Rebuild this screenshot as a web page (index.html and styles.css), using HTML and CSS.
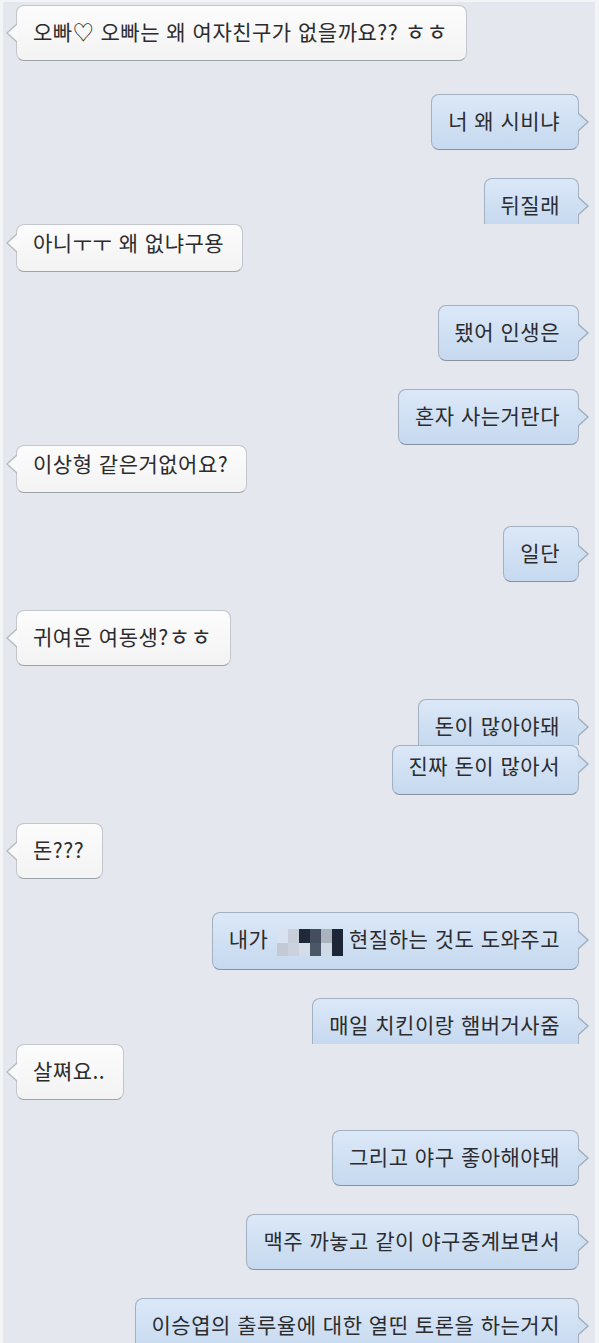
FILE: index.html
```html
<!DOCTYPE html>
<html lang="ko">
<head>
<meta charset="utf-8">
<title>채팅</title>
<link rel="stylesheet" href="styles.css">
</head>
<body>
<div class="chat">
  <div class="row in"><div class="bubble">오빠♡ 오빠는 왜 여자친구가 없을까요?? <span class="jamo">ㅎㅎ</span></div></div>
  <div class="row out wide"><div class="bubble">너 왜 시비냐</div></div>
  <div class="row out"><div class="bubble cut">뒤질래</div></div>
  <div class="row in joined"><div class="bubble short">아니ㅜㅜ 왜 없냐구용</div></div>
  <div class="row out wide"><div class="bubble">됐어 인생은</div></div>
  <div class="row out"><div class="bubble">혼자 사는거란다</div></div>
  <div class="row in joined"><div class="bubble short">이상형 같은거없어요?</div></div>
  <div class="row out wide"><div class="bubble">일단</div></div>
  <div class="row in"><div class="bubble">귀여운 여동생?<span class="jamo">ㅎㅎ</span></div></div>
  <div class="row out wide"><div class="bubble cut">돈이 많아야돼</div></div>
  <div class="row out joined"><div class="bubble short taller">진짜 돈이 많아서</div></div>
  <div class="row in"><div class="bubble">돈???</div></div>
  <div class="row out wide"><div class="bubble">내가 <span class="mosaic"><span class="mosaic-grid"><i class="m1"></i><i class="m2"></i><i class="m3"></i><i class="m4"></i><i class="m5"></i><i class="m6"></i><i class="m7"></i><i class="m8"></i><i class="m9"></i><i class="m10"></i><i class="m11"></i><i class="m12"></i></span></span> 현질하는 것도 도와주고</div></div>
  <div class="row out"><div class="bubble cut">매일 치킨이랑 햄버거사줌</div></div>
  <div class="row in joined"><div class="bubble">살쪄요..</div></div>
  <div class="row out wide tight"><div class="bubble">그리고 야구 좋아해야돼</div></div>
  <div class="row out"><div class="bubble">맥주 까놓고 같이 야구중계보면서</div></div>
  <div class="row out"><div class="bubble">이승엽의 출루율에 대한 열띤 토론을 하는거지</div></div>
</div>
</body>
</html>
```

FILE: styles.css
```css
html, body {
  margin: 0;
  padding: 0;
}
body {
  background: #f3f4f6;
  height: 1343px;
  overflow: hidden;
  font-family: "Noto Sans CJK KR", "Noto Sans", sans-serif;
}
.chat {
  margin: 2px 4px 0 3px;
  height: 1341px;
  overflow: hidden;
  box-sizing: border-box;
  padding: 3px 16px 0 13px;
  background: #e4e7ed;
  display: flex;
  flex-direction: column;
}
.row {
  display: flex;
  margin-top: 28px;
  flex-shrink: 0;
}
.row:first-child { margin-top: 0; }
.row.wide { margin-top: 33px; }
.row.wide.tight { margin-top: 30px; }
.row.joined { margin-top: 0; }
.row.in { justify-content: flex-start; }
.row.out { justify-content: flex-end; }

.bubble {
  position: relative;
  font-size: 21px;
  letter-spacing: 0.5px;
  line-height: 24px;
  color: #2c2c2e;
  padding: 13px 18px 17px 16px;
  border: 1px solid;
  border-radius: 8px;
  white-space: nowrap;
}
.jamo {
  font-size: 1.1em;
  line-height: 0;
}
.in .bubble {
  background: linear-gradient(#fcfcfc, #f3f3f4);
  border-color: #c3c7cd;
  border-bottom-color: #9ea3aa;
}
.out .bubble {
  background: linear-gradient(#dbe8f8, #c6d9ef);
  border-color: #a3b0c0;
  border-bottom-color: #87929f;
}
.bubble.short { padding-top: 5px; }
.bubble.short.taller { padding-top: 7px; padding-bottom: 17px; }
.bubble.cut {
  padding-bottom: 8px;
  border-bottom: none;
  border-bottom-left-radius: 0;
  border-bottom-right-radius: 0;
}

.bubble::before,
.bubble::after {
  content: "";
  position: absolute;
  width: 0;
  height: 0;
  border-style: solid;
}
.bubble::before { top: 17px; }
.bubble::after { top: 18px; }
.bubble.short::before { top: 8px; }
.bubble.short::after { top: 9px; }

.in .bubble::before {
  left: -11px;
  border-width: 10px 11px 10px 0;
  border-color: transparent #b6bbc2 transparent transparent;
}
.in .bubble::after {
  left: -9px;
  border-width: 9px 10px 9px 0;
  border-color: transparent #f9f9fa transparent transparent;
}
.out .bubble::before {
  right: -11px;
  border-width: 10px 0 10px 11px;
  border-color: transparent transparent transparent #a0adbd;
}
.out .bubble::after {
  right: -9px;
  border-width: 9px 0 9px 10px;
  border-color: transparent transparent transparent #d0e0f3;
}

.mosaic {
  display: inline-block;
  width: 66px;
  height: 27px;
  overflow: hidden;
  vertical-align: -5px;
  margin: -4px 0 -4px 2px;
}
.mosaic-grid {
  display: grid;
  grid-template-columns: repeat(6, 11px);
  grid-template-rows: 14px 13px;
}
.mosaic i { display: block; }
.m1 { background: #d9e2ef; }
.m2 { background: #c8cfda; }
.m3 { background: #1f2939; }
.m4 { background: #434d5e; }
.m5 { background: #a9b2be; }
.m6 { background: #1c2636; }
.m7 { background: #c3cad6; }
.m8 { background: #cbd2dd; }
.m9 { background: #d4dce8; }
.m10 { background: #4b5667; }
.m11 { background: #cfd8e5; }
.m12 { background: #1c2636; }
```
